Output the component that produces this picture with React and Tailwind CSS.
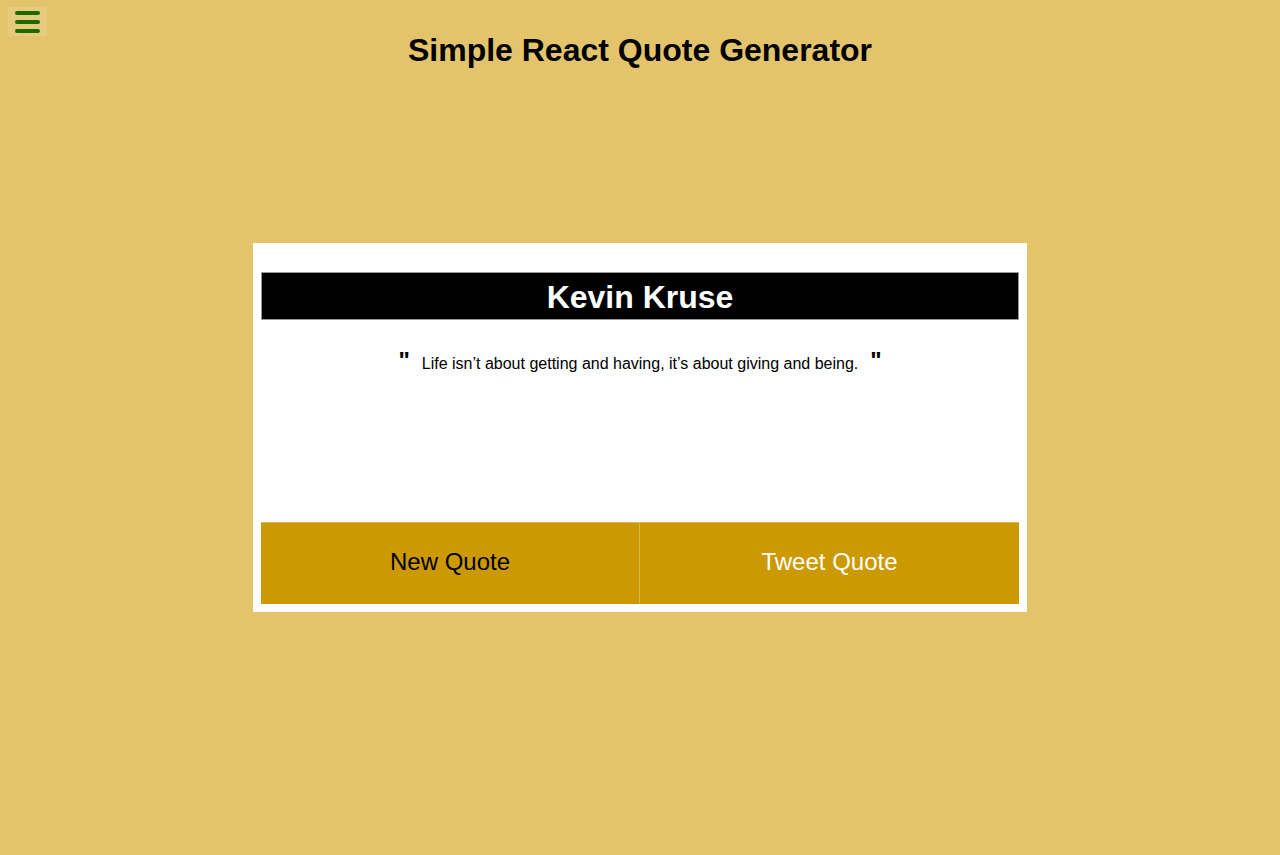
import React, { useState } from "react";

const quote = {
  author: "Kevin Kruse",
  text: "Life isn’t about getting and having, it’s about giving and being.",
};

export default function App() {
  const [current] = useState(quote);

  return (
    <div className="min-h-[855px] bg-[#e3c46b] font-['Liberation_Sans',Arial,sans-serif] text-black">
      {/* Menu toggle */}
      <div className="absolute left-[8px] top-[7px] flex h-[29px] w-[39px] flex-col items-center justify-center gap-[5px] bg-[#e7cb7c]">
        <span className="block h-[4px] w-[25px] rounded-full bg-[#1d6b00]" />
        <span className="block h-[4px] w-[25px] rounded-full bg-[#1d6b00]" />
        <span className="block h-[4px] w-[25px] rounded-full bg-[#1d6b00]" />
      </div>

      <h1 className="pt-[30px] text-center text-[32px] font-bold leading-[40px]">
        Simple React Quote Generator
      </h1>

      <div className="flex justify-center pt-[173px]">
        <div className="w-[774px] bg-white p-[8px]">
          <div className="mt-[21px] h-[48px] border border-[#999] bg-black text-center text-[32px] font-bold leading-[48px] text-white">
            {current.author}
          </div>
          <div className="flex h-[202px] justify-center pt-[30px]">
            <p className="flex items-start text-[16px] leading-[22px]">
              <span className="mr-[12px] pt-[1px] text-[24px] font-bold leading-[20px]">"</span>
              <span className="pt-[3px]">{current.text}</span>
              <span className="ml-[12px] pt-[1px] text-[24px] font-bold leading-[20px]">"</span>
            </p>
          </div>
          <div className="grid grid-cols-[378px_1fr]">
            <button className="h-[82px] border-t border-[#dcb84a] bg-[#cc9900] pb-[3px] text-[24px] text-black">
              New Quote
            </button>
            <button className="h-[82px] border-l border-t border-[#dcb84a] bg-[#cc9900] pb-[3px] text-[24px] text-white">
              Tweet Quote
            </button>
          </div>
        </div>
      </div>
    </div>
  );
}
